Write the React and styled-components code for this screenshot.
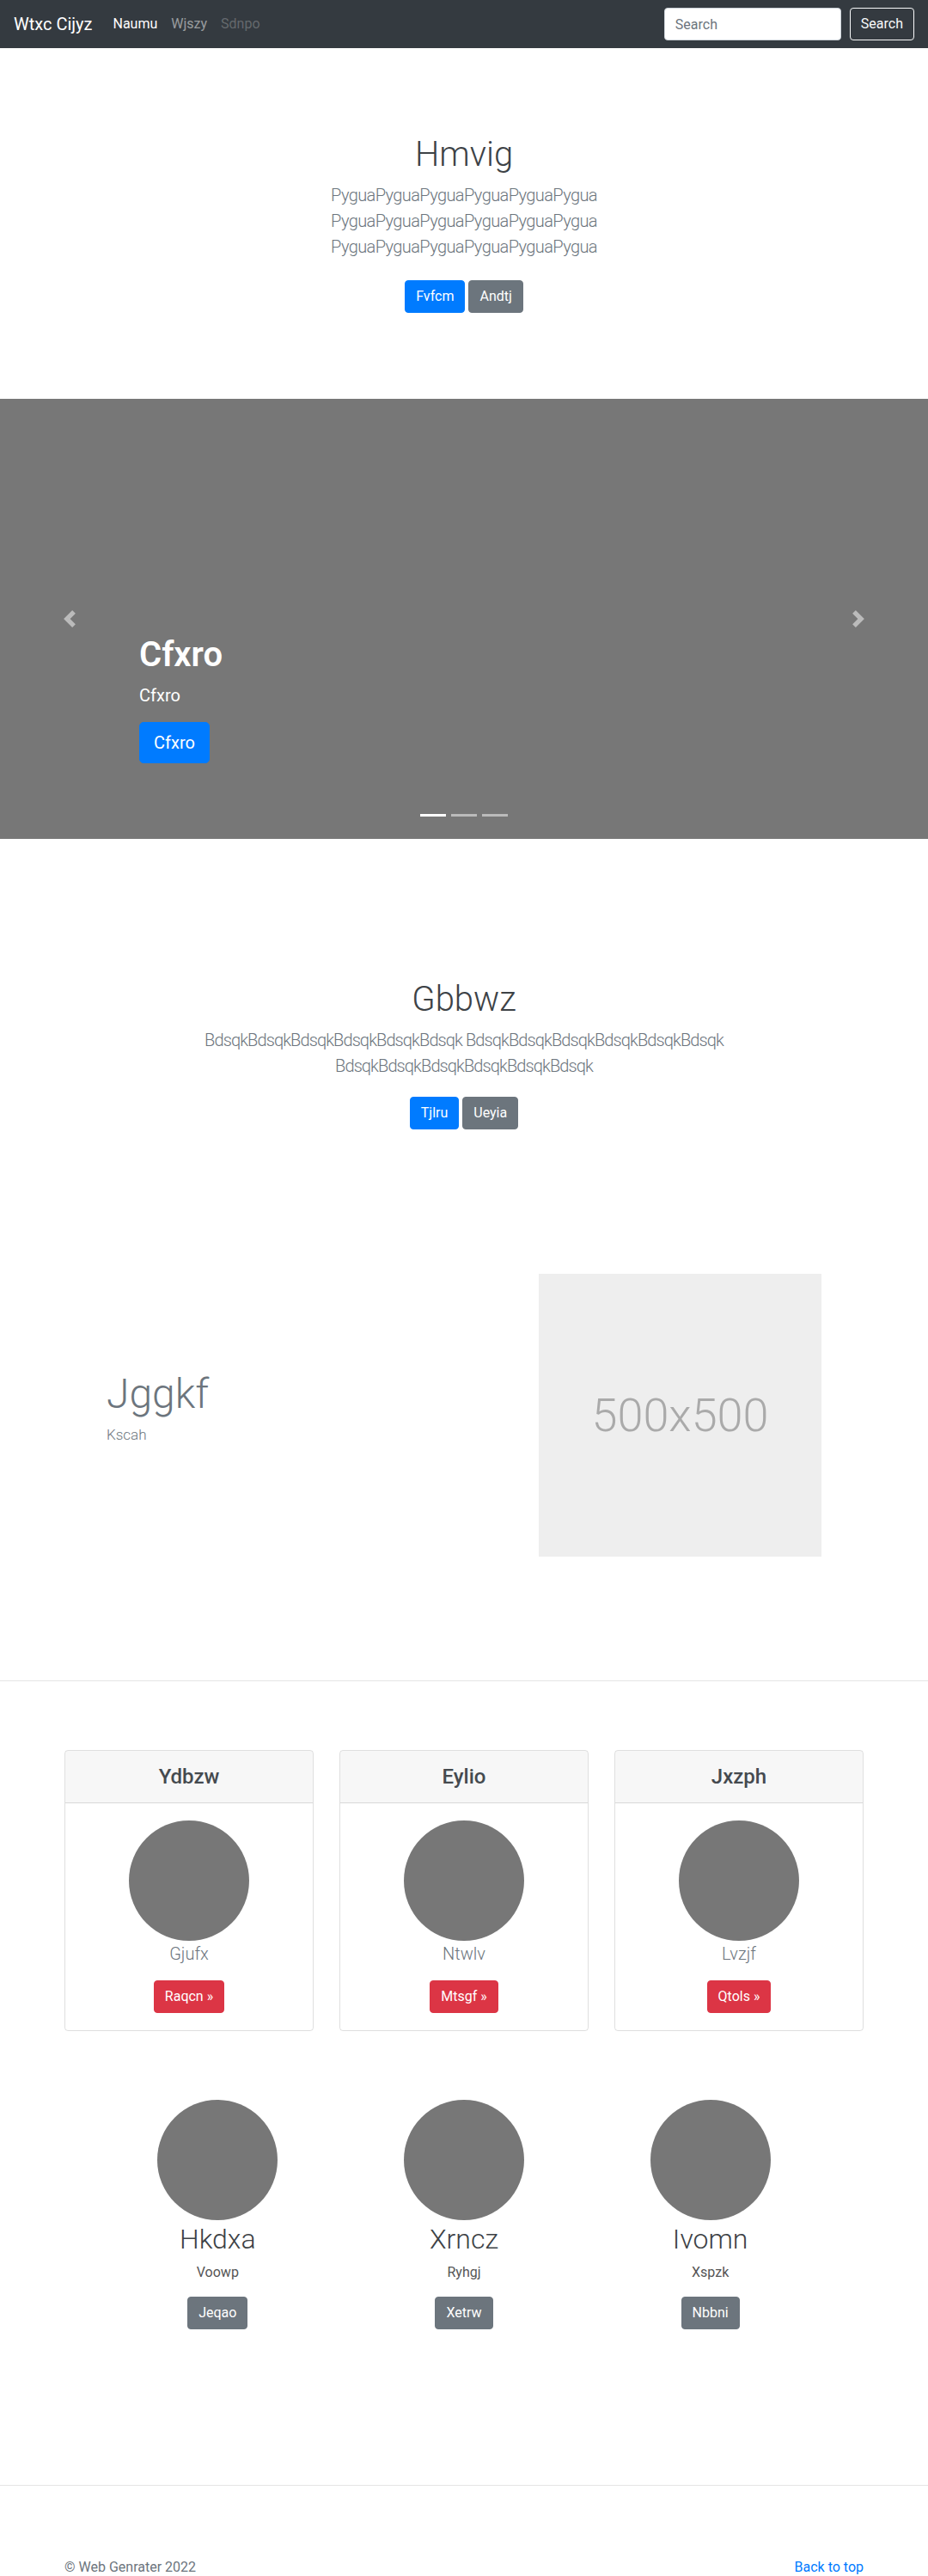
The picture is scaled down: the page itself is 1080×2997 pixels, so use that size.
import React from "react";
import styled, { createGlobalStyle } from "styled-components";

const GlobalStyle = createGlobalStyle`
  * {
    box-sizing: border-box;
  }
  body {
    margin: 0;
    font-family: "Segoe UI", Roboto, "Helvetica Neue", Arial, sans-serif;
    font-size: 16px;
    line-height: 1.5;
    color: #212529;
    background: #fff;
  }
`;

const Navbar = styled.nav`
  display: flex;
  align-items: center;
  height: 56px;
  padding: 0 16px;
  background: #343a40;
`;

const Brand = styled.a`
  margin-right: 16px;
  font-size: 20px;
  line-height: 30px;
  color: #fff;
  text-decoration: none;
`;

const NavList = styled.ul`
  display: flex;
  flex: 1;
  margin: 0;
  padding: 0;
  list-style: none;
`;

const navColors = {
  active: "#fff",
  normal: "rgba(255, 255, 255, 0.5)",
  disabled: "rgba(255, 255, 255, 0.25)",
};

const NavLink = styled.a`
  display: block;
  padding: 8px;
  line-height: 24px;
  color: ${(props) => navColors[props.$state]};
  text-decoration: none;
`;

const SearchForm = styled.form`
  display: flex;
  align-items: center;
  gap: 10px;
`;

const SearchInput = styled.input`
  width: 206px;
  height: 38px;
  padding: 6px 12px;
  font: inherit;
  color: #495057;
  background: #fff;
  border: 1px solid #ced4da;
  border-radius: 4px;
  &::placeholder {
    color: #6c757d;
  }
`;

const SearchButton = styled.button`
  height: 38px;
  padding: 6px 12px;
  font: inherit;
  color: #f8f9fa;
  background: transparent;
  border: 1px solid #f8f9fa;
  border-radius: 4px;
`;

const Hero = styled.section`
  padding: ${(props) => props.$top}px 15px 0;
  text-align: center;
  min-height: ${(props) => props.$height || 0}px;
`;

const HeroTitle = styled.h1`
  margin: 0 0 8px;
  font-size: 40px;
  font-weight: 300;
  line-height: 1.2;
  color: #3d4246;
`;

const Lead = styled.p`
  max-width: ${(props) => props.$max}px;
  margin: 0 auto ${(props) => props.$mb}px;
  font-size: 20px;
  font-weight: 300;
  line-height: 1.5;
  letter-spacing: ${(props) => props.$ls}px;
  color: #6c757d;
`;

const ButtonRow = styled.p`
  margin: 0 0 16px;
`;

const btnColors = {
  primary: "#007bff",
  secondary: "#6c757d",
  danger: "#dc3545",
};

const Button = styled.a`
  display: inline-block;
  margin: ${(props) => (props.$my ? "8px 0" : "0")};
  padding: ${(props) => (props.$lg ? "8px 16px" : "6px 12px")};
  font-size: ${(props) => (props.$lg ? 20 : 16)}px;
  line-height: ${(props) => (props.$lg ? 30 : 24)}px;
  color: #fff;
  background: ${(props) => btnColors[props.$variant]};
  border: 1px solid ${(props) => btnColors[props.$variant]};
  border-radius: ${(props) => (props.$lg ? 5 : 4)}px;
  text-decoration: none;
  vertical-align: middle;
`;

const Carousel = styled.div`
  position: relative;
  height: 512px;
  background: #777;
  overflow: hidden;
`;

const Caption = styled.div`
  position: absolute;
  left: 15%;
  right: 15%;
  bottom: 52px;
  padding: 20px 0;
  color: #fff;
  text-align: left;
`;

const CaptionTitle = styled.h1`
  margin: 0 0 8px;
  font-size: 40px;
  font-weight: 600;
  line-height: 1.2;
`;

const CaptionText = styled.p`
  margin: 0 0 16px;
  font-size: ${(props) => (props.$lead ? 20 : 16)}px;
  line-height: ${(props) => (props.$lead ? 30 : 24)}px;
`;

const Control = styled.a`
  position: absolute;
  top: 0;
  bottom: 0;
  ${(props) => (props.$side === "prev" ? "left: 0;" : "right: 0;")}
  width: 15%;
  display: flex;
  align-items: center;
  justify-content: center;
  opacity: 0.5;
`;

const Indicators = styled.ol`
  position: absolute;
  left: 0;
  right: 0;
  bottom: 26px;
  display: flex;
  justify-content: center;
  gap: 6px;
  margin: 0;
  padding: 0;
  list-style: none;
`;

const Indicator = styled.li`
  width: 30px;
  height: 3px;
  background: #fff;
  opacity: ${(props) => (props.$active ? 1 : 0.5)};
`;

const Feature = styled.section`
  display: grid;
  grid-template-columns: 503px 329px;
  align-items: center;
  max-width: 960px;
  margin: 0 auto;
  padding: 144px 0 144px 64px;
`;

const FeatureHeading = styled.h2`
  margin: 0 0 6px;
  font-size: 48px;
  font-weight: 300;
  line-height: 1.2;
  color: #6c757d;
`;

const FeatureSub = styled.p`
  margin: 0 0 17px;
  font-size: 17px;
  font-weight: 300;
  color: #6c757d;
`;

const Placeholder = styled.div`
  display: flex;
  align-items: center;
  justify-content: center;
  width: 329px;
  height: 329px;
  background: #eee;
  color: #aaa;
  font-size: 54px;
  font-weight: 300;
`;

const Divider = styled.hr`
  margin: 0;
  border: 0;
  border-top: 1px solid #e5e5e5;
`;

const Container = styled.div`
  max-width: 960px;
  margin: 0 auto;
  padding: ${(props) => props.$pad || "0 15px"};
`;

const CardGrid = styled.div`
  display: grid;
  grid-template-columns: repeat(3, 1fr);
  gap: 30px;
`;

const Card = styled.div`
  text-align: center;
  border: 1px solid rgba(0, 0, 0, 0.125);
  border-radius: 4px;
  overflow: hidden;
`;

const CardHeader = styled.div`
  padding: 12px 20px;
  background: rgba(0, 0, 0, 0.03);
  border-bottom: 1px solid rgba(0, 0, 0, 0.125);
`;

const CardTitle = styled.h4`
  margin: 0;
  font-size: 24px;
  font-weight: 500;
  line-height: 36px;
  color: #454a4f;
`;

const CardBody = styled.div`
  padding: 20px;
`;

const Avatar = styled.div`
  width: 140px;
  height: 140px;
  margin: 0 auto;
  border-radius: 50%;
  background: #777;
`;

const CardText = styled.p`
  margin: 0 0 16px;
  font-size: 20px;
  font-weight: 300;
  line-height: 30px;
  color: #6c757d;
`;

const Marketing = styled.section`
  display: grid;
  grid-template-columns: repeat(3, 1fr);
  max-width: 960px;
  margin: 0 auto;
  padding: 80px 50px 181px;
  text-align: center;
`;

const MarketingTitle = styled.h2`
  margin: 3px 0 8px;
  font-size: 32px;
  font-weight: 300;
  line-height: 1.2;
  color: #3d4246;
`;

const MarketingText = styled.p`
  margin: 0 0 16px;
  color: #555;
`;

const Footer = styled.footer`
  padding: 83px 0 48px;
  color: #6c757d;
`;

const FooterRow = styled.div`
  display: flex;
  justify-content: space-between;
  > p {
    margin: 0 0 16px;
  }
  a {
    color: #007bff;
    text-decoration: none;
  }
`;

const Chevron = ({ dir }) => (
  <svg width="20" height="20" viewBox="0 0 8 8" fill="#fff">
    <path
      d={
        dir === "prev"
          ? "M5.25 0l-4 4 4 4 1.5-1.5L4.25 4l2.5-2.5L5.25 0z"
          : "M2.75 0l-1.5 1.5L3.75 4l-2.5 2.5L2.75 8l4-4-4-4z"
      }
    />
  </svg>
);

const cards = [
  { title: "Ydbzw", text: "Gjufx", btn: "Raqcn »" },
  { title: "Eylio", text: "Ntwlv", btn: "Mtsgf »" },
  { title: "Jxzph", text: "Lvzjf", btn: "Qtols »" },
];

const people = [
  { name: "Hkdxa", text: "Voowp", btn: "Jeqao" },
  { name: "Xrncz", text: "Ryhgj", btn: "Xetrw" },
  { name: "Ivomn", text: "Xspzk", btn: "Nbbni" },
];

const pygua = "PyguaPyguaPyguaPyguaPyguaPygua";
const bdsqk = "BdsqkBdsqkBdsqkBdsqkBdsqkBdsqk";

export default function App() {
  return (
    <>
      <GlobalStyle />
      <Navbar>
        <Brand href="#">Wtxc Cijyz</Brand>
        <NavList>
          <li>
            <NavLink href="#" $state="active">
              Naumu
            </NavLink>
          </li>
          <li>
            <NavLink href="#" $state="normal">
              Wjszy
            </NavLink>
          </li>
          <li>
            <NavLink href="#" $state="disabled">
              Sdnpo
            </NavLink>
          </li>
        </NavList>
        <SearchForm onSubmit={(e) => e.preventDefault()}>
          <SearchInput type="search" placeholder="Search" />
          <SearchButton type="submit">Search</SearchButton>
        </SearchForm>
      </Navbar>

      <Hero $top={100} $height={408}>
        <HeroTitle>Hmvig</HeroTitle>
        <Lead $max={610} $mb={16} $ls={-0.6}>{`${pygua} ${pygua} ${pygua}`}</Lead>
        <ButtonRow>
          <Button href="#" $variant="primary" $my>
            Fvfcm
          </Button>{" "}
          <Button href="#" $variant="secondary" $my>
            Andtj
          </Button>
        </ButtonRow>
      </Hero>

      <Carousel>
        <Control $side="prev">
          <Chevron dir="prev" />
        </Control>
        <Control $side="next">
          <Chevron dir="next" />
        </Control>
        <Caption>
          <CaptionTitle>Cfxro</CaptionTitle>
          <CaptionText $lead>Cfxro</CaptionText>
          <CaptionText>
            <Button href="#" $variant="primary" $lg>
              Cfxro
            </Button>
          </CaptionText>
        </Caption>
        <Indicators>
          <Indicator $active />
          <Indicator />
          <Indicator />
        </Indicators>
      </Carousel>

      <Hero $top={163}>
        <HeroTitle>Gbbwz</HeroTitle>
        <Lead $max={700} $mb={13} $ls={-0.9}>{`${bdsqk} ${bdsqk} ${bdsqk}`}</Lead>
        <ButtonRow>
          <Button href="#" $variant="primary" $my>
            Tjlru
          </Button>{" "}
          <Button href="#" $variant="secondary" $my>
            Ueyia
          </Button>
        </ButtonRow>
      </Hero>

      <Feature>
        <div>
          <FeatureHeading>Jggkf</FeatureHeading>
          <FeatureSub>Kscah</FeatureSub>
        </div>
        <Placeholder>500x500</Placeholder>
      </Feature>

      <Divider />

      <Container $pad="80px 15px 0">
        <CardGrid>
          {cards.map((c) => (
            <Card key={c.title}>
              <CardHeader>
                <CardTitle>{c.title}</CardTitle>
              </CardHeader>
              <CardBody>
                <Avatar />
                <CardText>{c.text}</CardText>
                <Button href="#" $variant="danger">
                  {c.btn}
                </Button>
              </CardBody>
            </Card>
          ))}
        </CardGrid>
      </Container>

      <Marketing>
        {people.map((p) => (
          <div key={p.name}>
            <Avatar />
            <MarketingTitle>{p.name}</MarketingTitle>
            <MarketingText>{p.text}</MarketingText>
            <Button href="#" $variant="secondary">
              {p.btn}
            </Button>
          </div>
        ))}
      </Marketing>

      <Divider />

      <Footer>
        <Container>
          <FooterRow>
            <p>© Web Genrater 2022</p>
            <p>
              <a href="#">Back to top</a>
            </p>
          </FooterRow>
        </Container>
      </Footer>
    </>
  );
}
